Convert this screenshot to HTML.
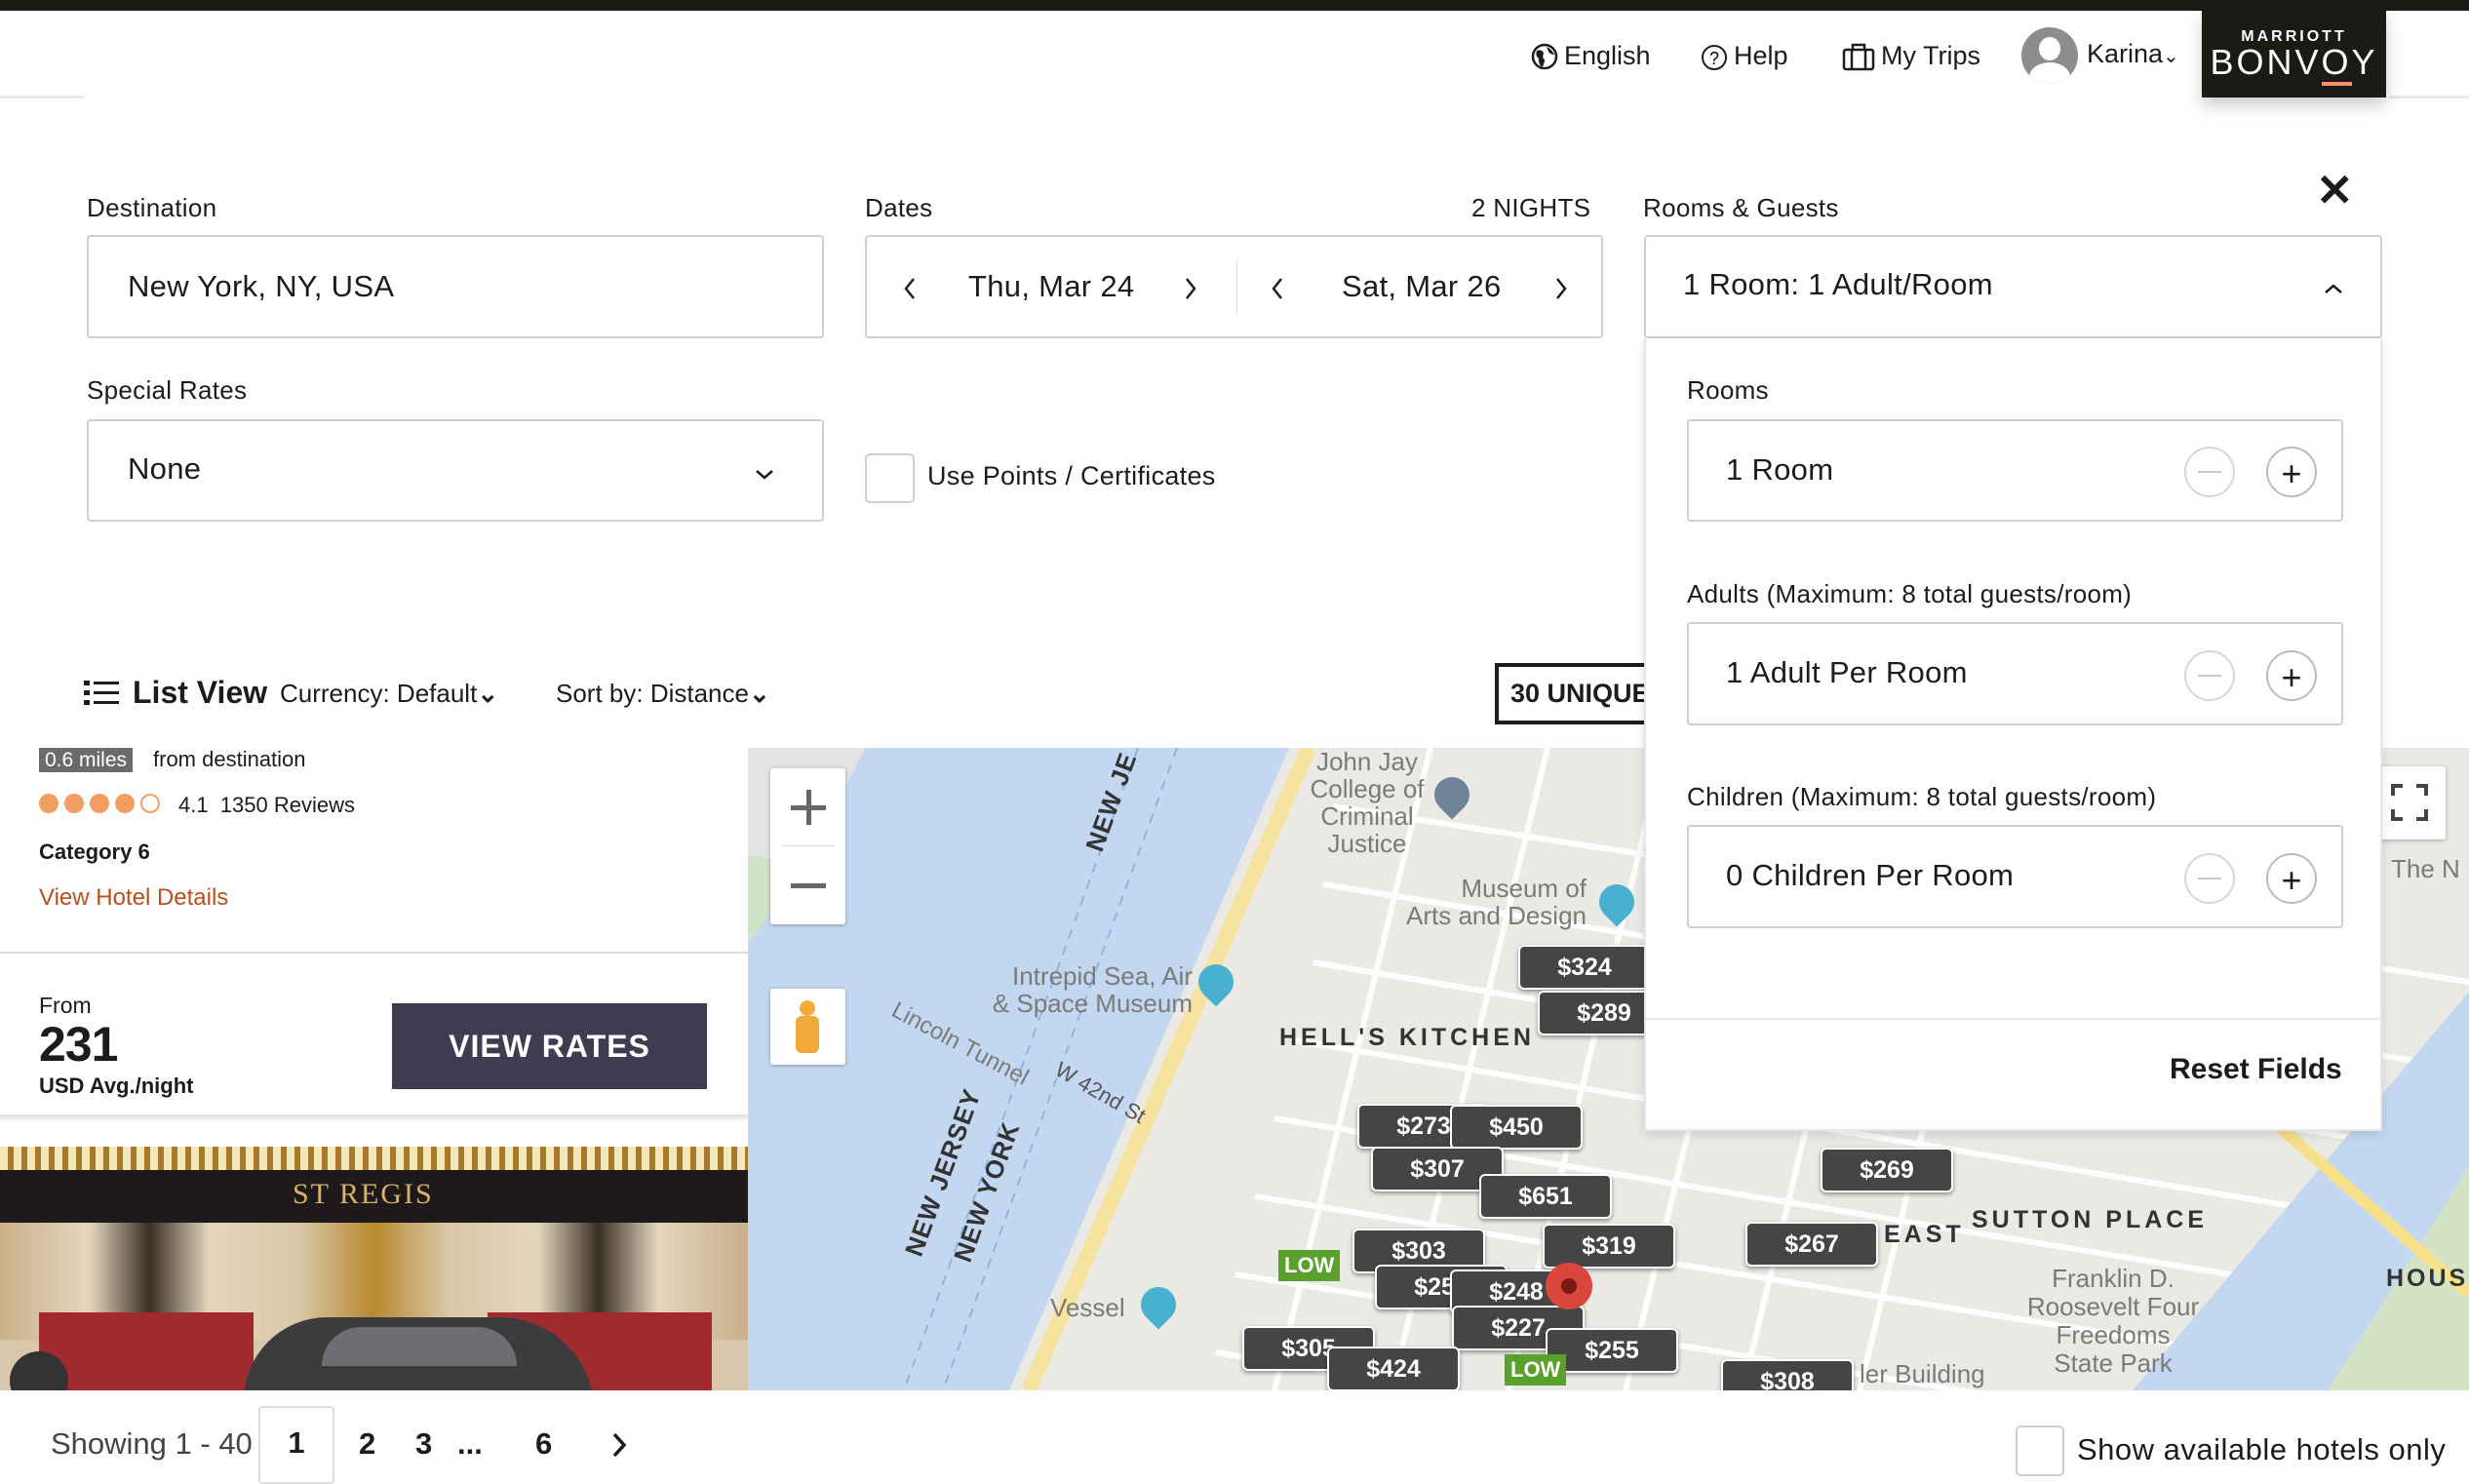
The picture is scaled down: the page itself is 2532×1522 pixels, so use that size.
<!DOCTYPE html>
<html><head><meta charset="utf-8">
<style>
*{box-sizing:border-box;margin:0;padding:0}
body{width:2532px;height:1514px;overflow:hidden;background:#fff;font-family:"Liberation Sans",sans-serif;color:#1c1c1c;position:relative}
.abs{position:absolute}
.lbl{position:absolute;font-size:26px;color:#1c1c1c;letter-spacing:.3px}
.box{position:absolute;border:2px solid #cfcfcf;border-radius:4px;background:#fff}
.inp{font-size:31px;position:absolute;letter-spacing:.3px}
.circ{position:absolute;width:52px;height:52px;border-radius:50%;border:2px solid #d6d6d6;}
.circ.p{border-color:#bbb}
.circ span{position:absolute;left:50%;top:50%;transform:translate(-50%,-50%);}
.mk{position:absolute;width:136px;height:46px;background:#454545;border:2px solid #fff;border-radius:6px;color:#fff;font-weight:bold;font-size:25px;text-align:center;line-height:42px;box-shadow:0 2px 4px rgba(0,0,0,.4)}
.low{position:absolute;background:#5aa02c;color:#fff;font-weight:bold;font-size:22px;padding:0 6px;height:32px;line-height:32px}
.ml{position:absolute;color:#7a7a7a;font-size:26px;line-height:28px;text-align:center}
.mlb{position:absolute;color:#333;font-size:25px;font-weight:bold;letter-spacing:4px}
.pin{position:absolute;width:36px;height:36px;border-radius:50% 50% 50% 0;transform:rotate(-45deg);background:#4ab0cf}
</style></head><body>
<div class="abs" style="left:0;top:0;width:2532px;height:11px;background:#1c1a17"></div>
<div class="abs" style="left:0;top:98px;width:86px;height:3px;background:#e8e8e8"></div>
<div class="abs" style="left:2450px;top:98px;width:82px;height:3px;background:#e8e8e8"></div>
<div class="abs" style="left:1570px;top:42px;font-size:27px;display:flex;align-items:center;gap:6px">
<svg width="28" height="28" viewBox="0 0 28 28"><circle cx="14" cy="14" r="12" fill="none" stroke="#1c1c1c" stroke-width="2.5"/><path d="M6 8 Q12 6 13 11 Q11 15 14 17 Q14 22 11 25 Q7 20 8 16 Q4 13 6 8Z M16 4 Q21 6 24 12 Q20 12 18 9Z" fill="#1c1c1c"/></svg>English</div>
<div class="abs" style="left:1744px;top:42px;font-size:27px;display:flex;align-items:center;gap:6px">
<svg width="28" height="28" viewBox="0 0 28 28"><circle cx="14" cy="15" r="12" fill="none" stroke="#1c1c1c" stroke-width="2"/><text x="14" y="22" font-size="18" text-anchor="middle" font-family="Liberation Sans">?</text></svg>Help</div>
<div class="abs" style="left:1889px;top:42px;font-size:27px;display:flex;align-items:center;gap:6px">
<svg width="34" height="30" viewBox="0 0 34 30"><rect x="2" y="8" width="30" height="20" rx="2" fill="none" stroke="#1c1c1c" stroke-width="2.5"/><path d="M11 8V3h12v5M10 8v20M24 8v20" fill="none" stroke="#1c1c1c" stroke-width="2.5"/></svg>My Trips</div>
<div class="abs" style="left:2073px;top:28px;width:58px;height:58px;border-radius:50%;background:#8d8d8d;overflow:hidden">
<div class="abs" style="left:18px;top:10px;width:22px;height:24px;border-radius:50%;background:#fff"></div>
<div class="abs" style="left:8px;top:36px;width:42px;height:30px;border-radius:50%;background:#fff"></div></div>
<div class="abs" style="left:2140px;top:40px;font-size:27px">Karina<span style="font-size:20px">&#8964;</span></div>
<div class="abs" style="left:2258px;top:11px;width:189px;height:89px;background:#1c1a17;color:#fff;text-align:center;box-shadow:0 8px 16px rgba(0,0,0,.2)">
<div style="font-size:16px;font-weight:bold;letter-spacing:3px;margin-top:18px">MARRIOTT</div>
<div style="font-size:36px;letter-spacing:3px;line-height:34px">BONV<span style="border-bottom:4px solid #ff8d6b">O</span>Y</div></div>
<div class="abs" style="left:2375px;top:168px;font-size:46px;font-weight:bold">&#10005;</div>
<div class="lbl" style="left:89px;top:198px">Destination</div>
<div class="lbl" style="left:887px;top:198px">Dates</div>
<div class="lbl" style="left:1509px;top:198px">2 NIGHTS</div>
<div class="lbl" style="left:1685px;top:198px">Rooms &amp; Guests</div>
<div class="box" style="left:89px;top:241px;width:756px;height:106px"><div class="inp" style="left:40px;top:33px">New York, NY, USA</div></div>
<div class="box" style="left:887px;top:241px;width:757px;height:106px">
<svg class="abs" style="left:36px;top:40px" width="16" height="26" viewBox="0 0 16 26"><path d="M12 3 L4 13 L12 23" fill="none" stroke="#1c1c1c" stroke-width="2.5"/></svg>
<div class="inp" style="left:104px;top:33px">Thu, Mar 24</div>
<svg class="abs" style="left:324px;top:40px" width="16" height="26" viewBox="0 0 16 26"><path d="M4 3 L12 13 L4 23" fill="none" stroke="#1c1c1c" stroke-width="2.5"/></svg>
<div class="abs" style="left:379px;top:24px;width:1px;height:56px;background:#ddd"></div>
<svg class="abs" style="left:413px;top:40px" width="16" height="26" viewBox="0 0 16 26"><path d="M12 3 L4 13 L12 23" fill="none" stroke="#1c1c1c" stroke-width="2.5"/></svg>
<div class="inp" style="left:487px;top:33px">Sat, Mar 26</div>
<svg class="abs" style="left:704px;top:40px" width="16" height="26" viewBox="0 0 16 26"><path d="M4 3 L12 13 L4 23" fill="none" stroke="#1c1c1c" stroke-width="2.5"/></svg></div>
<div class="box" style="left:1686px;top:241px;width:757px;height:106px"><div class="inp" style="left:38px;top:31px">1 Room: 1 Adult/Room</div>
<svg class="abs" style="left:694px;top:46px" width="22" height="14" viewBox="0 0 22 14"><path d="M3 11 L11 4 L19 11" fill="none" stroke="#1c1c1c" stroke-width="2.5"/></svg></div>
<div class="lbl" style="left:89px;top:385px">Special Rates</div>
<div class="box" style="left:89px;top:430px;width:756px;height:105px"><div class="inp" style="left:40px;top:31px">None</div>
<svg class="abs" style="left:682px;top:48px" width="22" height="14" viewBox="0 0 22 14"><path d="M3 3 L11 10 L19 3" fill="none" stroke="#1c1c1c" stroke-width="2.5"/></svg></div>
<div class="box" style="left:887px;top:465px;width:51px;height:51px;border-radius:5px"></div>
<div class="lbl" style="left:951px;top:473px;font-size:27px">Use Points / Certificates</div>
<svg class="abs" style="left:86px;top:697px" width="36" height="28" viewBox="0 0 36 28"><g fill="#1c1c1c"><rect x="0" y="1" width="6" height="5"/><rect x="10" y="2" width="26" height="3"/><rect x="0" y="11" width="6" height="5"/><rect x="10" y="12" width="26" height="3"/><rect x="0" y="21" width="6" height="5"/><rect x="10" y="22" width="26" height="3"/></g></svg>
<div class="abs" style="left:136px;top:692px;font-size:32px;font-weight:bold">List View</div>
<div class="abs" style="left:287px;top:696px;font-size:26px">Currency: Default<b>&#8964;</b></div>
<div class="abs" style="left:570px;top:696px;font-size:26px">Sort by: Distance<b>&#8964;</b></div>
<div class="abs" style="left:1533px;top:680px;width:160px;height:63px;border:4px solid #1c1c1c;font-size:27px;font-weight:bold;line-height:55px;padding-left:12px;overflow:hidden;white-space:nowrap">30 UNIQUE</div>
<div class="abs" style="left:40px;top:767px;height:25px;background:#6b6b6b;color:#fff;font-size:21px;padding:0 6px;line-height:25px">0.6 miles</div>
<div class="abs" style="left:157px;top:766px;font-size:22px">from destination</div>
<div class="abs" style="left:40px;top:814px;display:flex;gap:6px">
<span style="width:20px;height:20px;border-radius:50%;background:#f29d62"></span><span style="width:20px;height:20px;border-radius:50%;background:#f29d62"></span><span style="width:20px;height:20px;border-radius:50%;background:#f29d62"></span><span style="width:20px;height:20px;border-radius:50%;background:#f29d62"></span><span style="width:20px;height:20px;border-radius:50%;border:2px solid #f29d62"></span></div>
<div class="abs" style="left:183px;top:813px;font-size:22px">4.1 &nbsp;1350 Reviews</div>
<div class="abs" style="left:40px;top:861px;font-size:22px;font-weight:bold">Category 6</div>
<div class="abs" style="left:40px;top:907px;font-size:24px;color:#b4501c">View Hotel Details</div>
<div class="abs" style="left:0;top:976px;width:767px;height:2px;background:#ddd"></div>
<div class="abs" style="left:40px;top:1018px;font-size:23px">From</div>
<div class="abs" style="left:40px;top:1042px;font-size:50px;font-weight:bold;letter-spacing:-1px">231</div>
<div class="abs" style="left:40px;top:1101px;font-size:22px;font-weight:bold">USD Avg./night</div>
<div class="abs" style="left:402px;top:1029px;width:323px;height:88px;background:#3e3c50;color:#fff;font-size:32px;font-weight:bold;text-align:center;line-height:88px;letter-spacing:1px">VIEW RATES</div>
<div class="abs" style="left:0;top:1143px;width:767px;height:8px;background:linear-gradient(#ddd,#fff)"></div>
<div class="abs" style="left:0;top:1176px;width:767px;height:250px;overflow:hidden;background:#d8c7aa">
<div class="abs" style="left:0;top:0;width:767px;height:24px;background:repeating-linear-gradient(90deg,#f3e6b8 0 8px,#a57a2c 8px 14px)"></div>
<div class="abs" style="left:0;top:24px;width:767px;height:54px;background:#1e1a1c"></div>
<div class="abs" style="left:300px;top:32px;color:#d8b26a;font-size:30px;font-family:'Liberation Serif',serif;letter-spacing:2px">ST REGIS</div>
<div class="abs" style="left:0;top:78px;width:767px;height:120px;background:linear-gradient(90deg,#c9b08a,#e4d6bd 12%,#3a2f25 20%,#e4d6bd 28%,#d9c7a8 40%,#b8892f 50%,#d9c7a8 60%,#e4d6bd 72%,#3a2f25 80%,#e4d6bd 88%,#c9b08a)"></div>
<div class="abs" style="left:40px;top:170px;width:220px;height:80px;background:#a02a2e"></div>
<div class="abs" style="left:500px;top:170px;width:230px;height:80px;background:#a02a2e"></div>
<div class="abs" style="left:250px;top:175px;width:360px;height:110px;border-radius:140px 160px 20px 20px;background:#3c3c3e"></div>
<div class="abs" style="left:330px;top:185px;width:200px;height:40px;border-radius:80px 80px 0 0;background:#6d6d72"></div>
<div class="abs" style="left:10px;top:210px;width:60px;height:60px;border-radius:50%;background:#333"></div>
</div>
<div class="abs" style="left:767px;top:767px;width:1765px;height:659px;overflow:hidden;background:#ebe9e4">
<svg class="abs" style="left:0;top:0" width="1765" height="659" viewBox="0 0 1765 659">
<g stroke="#fff" stroke-width="6" opacity=".95">
<path d="M600 60 L1765 240 M590 140 L1765 330 M580 220 L1765 420 M560 300 L1765 500 M540 380 L1765 580 M520 460 L1765 660 M500 540 L1500 700 M480 620 L1300 760"/>
<path d="M700 0 L540 659 M820 0 L660 659 M940 0 L780 659 M1060 0 L900 659 M1180 0 L1020 659 M1300 0 L1140 659"/>
</g>
<polygon points="0,0 120,0 60,120 0,200" fill="#e3e3e3"/>
<polygon points="120,0 555,0 268,659 0,659 0,200 60,120" fill="#c3d8f0"/>
<path d="M575 0 L288 659" stroke="#f7e3a0" stroke-width="16"/>
<polygon points="0,110 60,120 0,200" fill="#cfe3c6"/>
<polygon points="1420,659 1765,250 1765,659" fill="#c3d8f0"/>
<polygon points="1620,659 1765,430 1765,659" fill="#d2e4c5"/>
<path d="M1300 150 L1765 560" stroke="#f7e08a" stroke-width="12"/>
<g stroke="#8fb4e0" stroke-width="2" stroke-dasharray="10 8" fill="none"><path d="M400 0 L160 659 M440 0 L200 659"/></g>
</svg>
<div class="ml" style="left:555px;top:0;width:160px">John Jay<br>College of<br>Criminal<br>Justice</div>
<div class="pin" style="left:704px;top:30px;background:#6f8499"></div>
<div class="ml" style="left:560px;top:130px;width:300px;text-align:right">Museum of<br>Arts and Design</div>
<div class="pin" style="left:873px;top:140px"></div>
<div class="ml" style="left:150px;top:220px;width:306px;text-align:right">Intrepid Sea, Air<br>&amp; Space Museum</div>
<div class="pin" style="left:462px;top:222px"></div>
<div class="mlb" style="left:545px;top:283px">HELL'S KITCHEN</div>
<div class="ml" style="left:310px;top:560px">Vessel</div>
<div class="pin" style="left:403px;top:553px"></div>
<div class="mlb" style="left:1255px;top:470px">SUTTON PLACE</div>
<div class="mlb" style="left:1165px;top:485px">EAST</div>
<div class="ml" style="left:1285px;top:530px;width:230px;line-height:29px">Franklin D.<br>Roosevelt Four<br>Freedoms<br>State Park</div>
<div class="ml" style="left:1140px;top:410px">thedral</div>
<div class="ml" style="left:1140px;top:628px">ler Building</div>
<div class="ml" style="left:1685px;top:110px">The N</div>
<div class="mlb" style="left:1680px;top:530px;letter-spacing:3px">HOUS</div>
<div class="ml" style="left:140px;top:290px;transform:rotate(28deg);font-size:24px">Lincoln Tunnel</div>
<div class="mlb" style="left:110px;top:420px;transform:rotate(-70deg);font-size:26px;letter-spacing:1px">NEW JERSEY</div>
<div class="mlb" style="left:170px;top:440px;transform:rotate(-70deg);font-size:26px;letter-spacing:1px">NEW YORK</div>
<div class="mlb" style="left:320px;top:40px;transform:rotate(-70deg);font-size:26px;letter-spacing:1px">NEW JE</div>
<div class="ml" style="left:310px;top:340px;transform:rotate(30deg);font-size:22px;color:#555">W 42nd St</div>
<div class="abs" style="left:23px;top:21px;width:77px;height:160px;background:#fff;border-radius:3px;box-shadow:0 1px 4px rgba(0,0,0,.3)">
<div class="abs" style="left:21px;top:38px;width:36px;height:5px;background:#666"></div><div class="abs" style="left:37px;top:22px;width:5px;height:36px;background:#666"></div>
<div class="abs" style="left:12px;top:79px;width:54px;height:1px;background:#ddd"></div>
<div class="abs" style="left:21px;top:118px;width:36px;height:5px;background:#666"></div></div>
<div class="abs" style="left:23px;top:247px;width:77px;height:78px;background:#fff;border-radius:3px;box-shadow:0 1px 4px rgba(0,0,0,.3)">
<div class="abs" style="left:30px;top:12px;width:16px;height:16px;border-radius:50%;background:#f2a93b"></div>
<div class="abs" style="left:26px;top:28px;width:24px;height:38px;border-radius:6px;background:#f2a93b"></div></div>
<div class="abs" style="left:1667px;top:19px;width:74px;height:75px;background:#fff;border-radius:3px;box-shadow:0 1px 4px rgba(0,0,0,.3)">
<svg class="abs" style="left:18px;top:18px" width="38" height="38" viewBox="0 0 38 38"><path d="M2 12V2h10M26 2h10v10M36 26v10H26M12 36H2V26" fill="none" stroke="#444" stroke-width="4"/></svg></div>
<div class="mk" style="left:790px;top:202px">$324</div>
<div class="mk" style="left:810px;top:249px">$289</div>
<div class="mk" style="left:625px;top:365px">$273</div>
<div class="mk" style="left:720px;top:366px">$450</div>
<div class="mk" style="left:639px;top:409px">$307</div>
<div class="mk" style="left:750px;top:437px">$651</div>
<div class="mk" style="left:620px;top:493px">$303</div>
<div class="mk" style="left:815px;top:488px">$319</div>
<div class="mk" style="left:643px;top:530px">$254</div>
<div class="low" style="left:544px;top:515px">LOW</div>
<div class="mk" style="left:720px;top:535px">$248</div>
<div class="mk" style="left:722px;top:572px">$227</div>
<div class="mk" style="left:507px;top:593px">$305</div>
<div class="mk" style="left:818px;top:595px">$255</div>
<div class="mk" style="left:594px;top:614px">$424</div>
<div class="low" style="left:776px;top:622px">LOW</div>
<div class="abs" style="left:818px;top:528px;width:48px;height:48px;border-radius:50%;background:#d9463b"></div>
<div class="abs" style="left:834px;top:544px;width:16px;height:16px;border-radius:50%;background:#7a1a12"></div>
<div class="mk" style="left:1100px;top:410px">$269</div>
<div class="mk" style="left:1023px;top:486px">$267</div>
<div class="mk" style="left:998px;top:627px">$308</div>
</div>
<div class="abs" style="left:1686px;top:347px;width:757px;height:813px;background:#fff;border:2px solid #e6e6e6;border-top:none;box-shadow:0 4px 10px rgba(0,0,0,.12)">
<div class="lbl" style="left:42px;top:38px">Rooms</div>
<div class="box" style="left:42px;top:83px;width:673px;height:105px"><div class="inp" style="left:38px;top:32px">1 Room</div>
<div class="circ" style="left:508px;top:26px"><span style="width:24px;height:2px;background:#ccc"></span></div>
<div class="circ p" style="left:592px;top:26px"><span style="font-size:36px;line-height:36px;margin-top:2px">+</span></div></div>
<div class="lbl" style="left:42px;top:247px">Adults (Maximum: 8 total guests/room)</div>
<div class="box" style="left:42px;top:291px;width:673px;height:106px"><div class="inp" style="left:38px;top:32px">1 Adult Per Room</div>
<div class="circ" style="left:508px;top:27px"><span style="width:24px;height:2px;background:#ccc"></span></div>
<div class="circ p" style="left:592px;top:27px"><span style="font-size:36px;line-height:36px;margin-top:2px">+</span></div></div>
<div class="lbl" style="left:42px;top:455px">Children (Maximum: 8 total guests/room)</div>
<div class="box" style="left:42px;top:499px;width:673px;height:106px"><div class="inp" style="left:38px;top:32px">0 Children Per Room</div>
<div class="circ" style="left:508px;top:27px"><span style="width:24px;height:2px;background:#ccc"></span></div>
<div class="circ p" style="left:592px;top:27px"><span style="font-size:36px;line-height:36px;margin-top:2px">+</span></div></div>
<div class="abs" style="left:0;top:697px;width:755px;height:2px;background:#e6e6e6"></div>
<div class="abs" style="left:537px;top:733px;font-size:30px;font-weight:bold">Reset Fields</div>
</div>
<div class="abs" style="left:52px;top:1463px;font-size:31px;color:#444">Showing 1 - 40</div>
<div class="abs" style="left:265px;top:1442px;width:78px;height:80px;border:2px solid #ddd;border-radius:4px;font-size:31px;font-weight:bold;text-align:center;line-height:72px">1</div>
<div class="abs" style="left:368px;top:1463px;font-size:31px;font-weight:bold">2</div>
<div class="abs" style="left:426px;top:1463px;font-size:31px;font-weight:bold">3</div>
<div class="abs" style="left:469px;top:1463px;font-size:31px;font-weight:bold">...</div>
<div class="abs" style="left:549px;top:1463px;font-size:31px;font-weight:bold">6</div>
<svg class="abs" style="left:626px;top:1468px" width="18" height="28" viewBox="0 0 18 28"><path d="M4 3 L14 14 L4 25" fill="none" stroke="#1c1c1c" stroke-width="3.5"/></svg>
<div class="box" style="left:2067px;top:1462px;width:50px;height:52px;border-radius:5px"></div>
<div class="abs" style="left:2130px;top:1469px;font-size:31px;letter-spacing:.5px">Show available hotels only</div>
</body></html>
